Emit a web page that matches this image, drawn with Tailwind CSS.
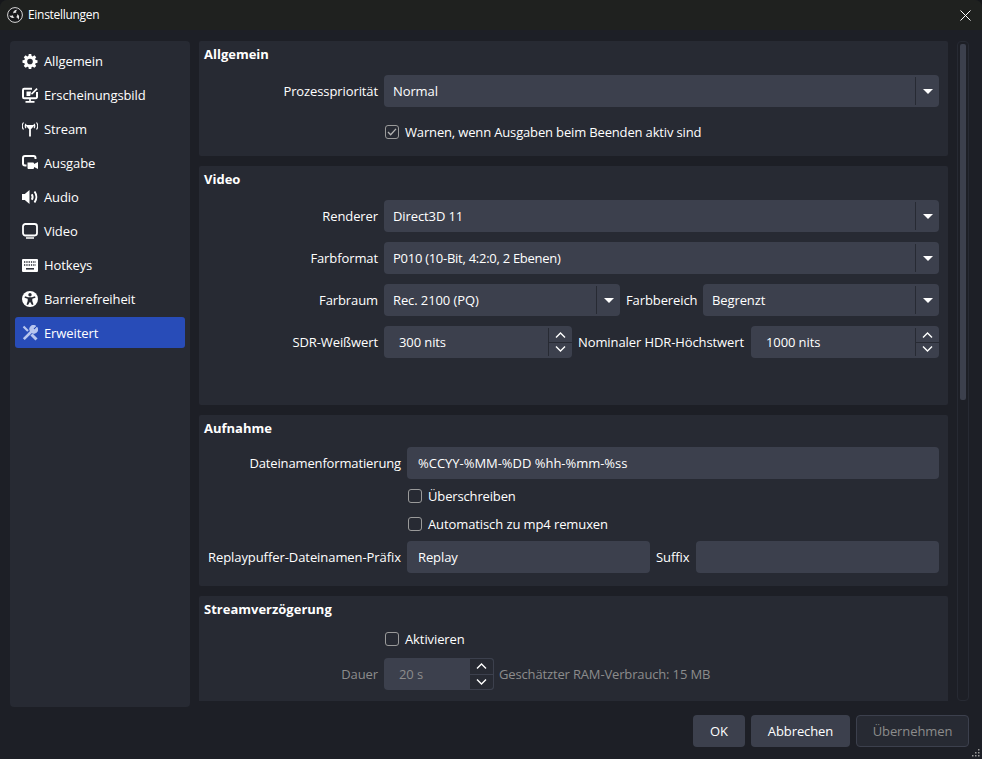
<!DOCTYPE html>
<html lang="de"><head><meta charset="utf-8"><title>Einstellungen</title>
<script src="https://cdn.jsdelivr.net/npm/@tailwindcss/browser@4"></script></head>
<body class="bg-[#16171a]">
<div class="w-[982px] h-[759px] overflow-hidden relative flex flex-col rounded-t-[7px] bg-[#1d1f26] text-white text-[13px] leading-[18px] tracking-[-0.1px] font-['Open_Sans',sans-serif]">
  <header class="h-[30px] shrink-0 bg-[#1f211f] flex items-center pl-[7px] pr-[11px]">
    <svg width="16" height="16" viewBox="0 0 16 16" class="mr-[5px]"><circle cx="8" cy="8" r="7.400" fill="#17181a" stroke="#d8d8d8" stroke-width="1"/><g fill="#e0e0e0"><path d="M6.300 6.600C5.800 4.500 7.500 2.600 10.600 2.800 9.300 3.500 8.800 4.500 9.300 5.900 8.300 5.500 7 5.700 6.300 6.600Z"/><path transform="rotate(120 8 8)" d="M6.300 6.600C5.800 4.500 7.500 2.600 10.600 2.800 9.300 3.500 8.800 4.500 9.300 5.900 8.300 5.500 7 5.700 6.300 6.600Z"/><path transform="rotate(240 8 8)" d="M6.300 6.600C5.800 4.500 7.500 2.600 10.600 2.800 9.300 3.500 8.800 4.500 9.300 5.900 8.300 5.500 7 5.700 6.300 6.600Z"/></g></svg>
    <span class="text-[12px] tracking-[-0.3px]">Einstellungen</span>
    <svg width="11" height="11" viewBox="0 0 11 11" class="ml-auto"><path d="M.5.500l10 10M10.500.500l-10 10" stroke="#fff" fill="none"/></svg>
  </header>
  <div class="flex h-[671px] pt-[11px] pl-[10px]">
    <nav class="w-[180px] h-[666px] bg-[#272a33] rounded-[4px] px-[5px] pt-[3px] shrink-0">
      <div class="h-[34px] flex items-center pl-[7px] gap-[6px]"><svg width="16" height="15" viewBox="0 0 25 24" fill="#fff"><path fill-rule="evenodd" d="M10 1h4l.6 3.100 1.700.7L19 3l3 3-1.800 2.700.7 1.700L24 11v4l-3.100.6-.7 1.700L22 20l-3 3-2.700-1.800-1.700.7L14 25h-4l-.6-3.100-1.700-.7L5 23l-3-3 1.800-2.700-.7-1.700L0 15v-4l3.100-.6.7-1.700L2 6l3-3 2.700 1.800 1.700-.7ZM12 8.500a4.500 4.500 0 1 0 0 9 4.500 4.500 0 0 0 0-9Z" transform="translate(.5 -1)"/></svg>Allgemein</div>
      <div class="h-[34px] flex items-center pl-[7px] gap-[6px]"><svg width="16" height="16" viewBox="0 0 16 16" fill="none"><path d="M10 1.800H2.200A1.200 1.200 0 0 0 1 3v7a1.200 1.200 0 0 0 1.200 1.200h11.600A1.200 1.200 0 0 0 15 10V5" stroke="#fff" stroke-width="2"/><path d="M4.500 4.500h4.500l-.8 4.500H4.500Z" fill="#fff"/><path d="M9 6.500l5.500-5.500 1.200 1.200L10 7.700Z" fill="#fff"/><path d="M8 11.500v2.500M3.500 14.800h9" stroke="#fff" stroke-width="1.700"/></svg>Erscheinungsbild</div>
      <div class="h-[34px] flex items-center pl-[7px] gap-[6px]"><svg width="16" height="16" viewBox="0 0 16 16" fill="none" stroke="#fff"><path d="M8 6v9.500M5.200 5h5.600L8 8Z" stroke-width="1.800"/><path d="M4 2.800c-.9 1.300-.9 3 0 4.300M1.500 1.500c-1.500 2-1.500 5 0 7M12 2.800c.9 1.300.9 3 0 4.300M14.500 1.500c1.500 2 1.500 5 0 7" stroke-width="1.200"/></svg>Stream</div>
      <div class="h-[34px] flex items-center pl-[7px] gap-[6px]"><svg width="16" height="16" viewBox="0 0 16 16" fill="none"><path d="M13.500 4V3a2 2 0 0 0-2-2H3a2 2 0 0 0-2 2v5.500a2 2 0 0 0 2 2h1.500" stroke="#fff" stroke-width="2"/><path d="M5.500 7.500H11a1 1 0 0 1 1 1v.5l4-2v7l-4-2v1a1 1 0 0 1-1 1H6.500a1 1 0 0 1-1-1Z" fill="#fff"/></svg>Ausgabe</div>
      <div class="h-[34px] flex items-center pl-[7px] gap-[6px]"><svg width="16" height="16" viewBox="0 0 16 16" fill="none"><path d="M0 5h2.800L7.500 1v14L2.800 11H0Z" fill="#fff"/><path d="M9.800 5.200c1 1.700 1 3.900 0 5.600M12.500 2.500c2.400 3.200 2.400 7.800 0 11" stroke="#fff" stroke-width="2"/></svg>Audio</div>
      <div class="h-[34px] flex items-center pl-[7px] gap-[6px]"><svg width="16" height="16" viewBox="0 0 16 16" fill="none"><rect x="1" y="1" width="14" height="11.500" rx="2.400" stroke="#fff" stroke-width="1.800"/><path d="M4 15h8" stroke="#fff" stroke-width="1.500"/></svg>Video</div>
      <div class="h-[34px] flex items-center pl-[7px] gap-[6px]"><svg width="16" height="13" viewBox="0 0 16 13"><rect width="16" height="13" rx="1" fill="#fff"/><path d="M2 3h12M2 6h12" stroke="#272a33" stroke-width="1.300" stroke-dasharray="1.300 1"/><path d="M4 9.800h8" stroke="#272a33" stroke-width="1.500"/></svg>Hotkeys</div>
      <div class="h-[34px] flex items-center pl-[7px] gap-[6px]"><svg width="16" height="16" viewBox="0 0 16 16"><circle cx="8" cy="8" r="8" fill="#fff"/><circle cx="8" cy="3.800" r="1.700" fill="#272a33"/><path d="M3 5.300 6 6.200h4l3-.9.500 1.400-3.200 1.100V10l1.200 3.600-1.500.5L8 10.800 6 14.100l-1.500-.5L5.700 10V7.800L2.500 6.700Z" fill="#272a33"/></svg>Barrierefreiheit</div>
      <div class="h-[31px] mt-[1px] flex items-center pl-[7px] gap-[6px] bg-[#284cb8] rounded-[3px]"><svg width="16" height="16" viewBox="0 0 16 16" fill="none" stroke="#b8c6ee"><path d="M1.800 14.200 9.500 6.500" stroke-width="2.600"/><path d="M9 7a3.800 3.800 0 0 1 5-6l-2.500 2.500 1 1L15 2a3.800 3.800 0 0 1-6 5Z" fill="#b8c6ee" stroke-width=".5"/><path d="M1.500 1.500l4.500 4.500" stroke-width="2.200"/><path d="M9.500 9.500l5 5" stroke-width="3"/></svg>Erweitert</div>
    </nav>
    <main class="w-[749px] ml-[9px] h-[660px] overflow-hidden flex flex-col gap-[10px] shrink-0">
      <section class="h-[115px] shrink-0 bg-[#272a33] rounded-[2px] px-[5px] pt-[4px]">
        <h2 class="font-bold h-[18px] tracking-normal">Allgemein</h2>
        <div class="flex items-center mt-[12px]"><label class="w-[174px] text-right mr-[6px]">Prozesspriorität</label><div class="w-[555px] h-[32px] bg-[#3c404d] rounded-[4px] flex items-center pl-[9px] relative">Normal<span class="absolute right-0 top-[2px] bottom-[2px] w-[24px] border-l border-[#272a33] flex items-center justify-center"><svg width="10" height="5" viewBox="0 0 10 5"><path d="M0 0h10L5 5Z" fill="#fff"/></svg></span></div></div>
        <div class="flex items-center mt-[16px] ml-[181px] gap-[6px]"><span class="w-[14px] h-[14px] border border-[#9a9a9a] rounded-[3px] flex items-center justify-center"><svg width="10" height="8" viewBox="0 0 11 9" fill="none"><path d="M1 4.500 4 7.500 10 1" stroke="#b4b4b4" stroke-width="1.500"/></svg></span><span class="tracking-[-0.155px]">Warnen, wenn Ausgaben beim Beenden aktiv sind</span></div>
      </section>
      <section class="h-[239px] shrink-0 bg-[#272a33] rounded-[2px] px-[5px] pt-[4px]">
        <h2 class="font-bold h-[18px] tracking-normal">Video</h2>
        <div class="flex flex-col gap-[10px] mt-[12px]">
          <div class="flex items-center"><label class="w-[174px] text-right mr-[6px]">Renderer</label><div class="w-[555px] h-[32px] bg-[#3c404d] rounded-[4px] flex items-center pl-[9px] relative">Direct3D 11<span class="absolute right-0 top-[2px] bottom-[2px] w-[24px] border-l border-[#272a33] flex items-center justify-center"><svg width="10" height="5" viewBox="0 0 10 5"><path d="M0 0h10L5 5Z" fill="#fff"/></svg></span></div></div>
          <div class="flex items-center"><label class="w-[174px] text-right mr-[6px]">Farbformat</label><div class="w-[555px] h-[32px] bg-[#3c404d] rounded-[4px] flex items-center pl-[9px] relative"><span class="tracking-[-0.27px]">P010 (10-Bit, 4:2:0, 2 Ebenen)</span><span class="absolute right-0 top-[2px] bottom-[2px] w-[24px] border-l border-[#272a33] flex items-center justify-center"><svg width="10" height="5" viewBox="0 0 10 5"><path d="M0 0h10L5 5Z" fill="#fff"/></svg></span></div></div>
          <div class="flex items-center"><label class="w-[174px] text-right mr-[6px]">Farbraum</label><div class="w-[236px] h-[32px] bg-[#3c404d] rounded-[4px] flex items-center pl-[9px] relative">Rec. 2100 (PQ)<span class="absolute right-0 top-[2px] bottom-[2px] w-[24px] border-l border-[#272a33] flex items-center justify-center"><svg width="10" height="5" viewBox="0 0 10 5"><path d="M0 0h10L5 5Z" fill="#fff"/></svg></span></div><label class="mx-[6px] w-[71px] whitespace-nowrap">Farbbereich</label><div class="w-[236px] h-[32px] bg-[#3c404d] rounded-[4px] flex items-center pl-[9px] relative">Begrenzt<span class="absolute right-0 top-[2px] bottom-[2px] w-[24px] border-l border-[#272a33] flex items-center justify-center"><svg width="10" height="5" viewBox="0 0 10 5"><path d="M0 0h10L5 5Z" fill="#fff"/></svg></span></div></div>
          <div class="flex items-center"><label class="w-[174px] text-right mr-[6px]">SDR-Weißwert</label>
            <div class="w-[188px] h-[32px] bg-[#3c404d] rounded-[4px] flex items-center pl-[15px] relative">300 nits<span class="absolute right-0 top-[2px] bottom-[2px] w-[24px] border-l border-[#272a33] flex flex-col"><span class="flex-1 border-b border-[#272a33] flex items-center justify-center"><svg width="11" height="6" viewBox="0 0 11 6" fill="none"><path d="M1 5.500l4.500-4.500 4.500 4.500" stroke="#fff" stroke-width="1.400"/></svg></span><span class="flex-1 flex items-center justify-center"><svg width="11" height="6" viewBox="0 0 11 6" fill="none"><path d="M1 .5l4.500 4.500 4.500-4.500" stroke="#fff" stroke-width="1.400"/></svg></span></span></div>
            <label class="mx-[6px] w-[167px] whitespace-nowrap">Nominaler HDR-Höchstwert</label>
            <div class="w-[188px] h-[32px] bg-[#3c404d] rounded-[4px] flex items-center pl-[15px] relative">1000 nits<span class="absolute right-0 top-[2px] bottom-[2px] w-[24px] border-l border-[#272a33] flex flex-col"><span class="flex-1 border-b border-[#272a33] flex items-center justify-center"><svg width="11" height="6" viewBox="0 0 11 6" fill="none"><path d="M1 5.500l4.500-4.500 4.500 4.500" stroke="#fff" stroke-width="1.400"/></svg></span><span class="flex-1 flex items-center justify-center"><svg width="11" height="6" viewBox="0 0 11 6" fill="none"><path d="M1 .5l4.500 4.500 4.500-4.500" stroke="#fff" stroke-width="1.400"/></svg></span></span></div>
          </div>
        </div>
      </section>
      <section class="h-[171px] shrink-0 bg-[#272a33] rounded-[2px] px-[5px] pt-[4px]">
        <h2 class="font-bold h-[18px] tracking-normal">Aufnahme</h2>
        <div class="flex items-center mt-[10px]"><label class="w-[197px] text-right mr-[6px] tracking-[-0.14px]">Dateinamenformatierung</label><div class="w-[532px] h-[32px] bg-[#3c404d] rounded-[4px] flex items-center pl-[11px] tracking-[-0.03px]">%CCYY-%MM-%DD %hh-%mm-%ss</div></div>
        <div class="flex items-center mt-[8px] ml-[204px] gap-[6px] h-[18px]"><span class="w-[14px] h-[14px] border border-[#9a9a9a] rounded-[3px]"></span><span class="tracking-[-0.15px]">Überschreiben</span></div>
        <div class="flex items-center mt-[10px] ml-[204px] gap-[6px] h-[18px]"><span class="w-[14px] h-[14px] border border-[#9a9a9a] rounded-[3px]"></span>Automatisch zu mp4 remuxen</div>
        <div class="flex items-center mt-[8px]"><label class="w-[197px] text-right mr-[6px] whitespace-nowrap tracking-[-0.07px]">Replaypuffer-Dateinamen-Präfix</label><div class="w-[243px] h-[32px] bg-[#3c404d] rounded-[4px] flex items-center pl-[11px]">Replay</div><label class="mx-[6px] w-[34px]">Suffix</label><div class="w-[243px] h-[32px] bg-[#3c404d] rounded-[4px]"></div></div>
      </section>
      <section class="h-[105px] shrink-0 bg-[#272a33] rounded-t-[2px] px-[5px] pt-[4px]">
        <h2 class="font-bold h-[18px] tracking-normal">Streamverzögerung</h2>
        <div class="flex items-center mt-[12px] ml-[181px] gap-[6px] h-[18px]"><span class="w-[14px] h-[14px] border border-[#9a9a9a] rounded-[3px]"></span>Aktivieren</div>
        <div class="flex items-center mt-[10px] text-[#8c8c8c]"><label class="w-[174px] text-right mr-[6px]">Dauer</label>
          <div class="w-[110px] h-[32px] bg-[#3c404d] rounded-[4px] flex items-center pl-[15px] relative">20 s<span class="absolute right-0 top-0 bottom-0 w-[24px] bg-[#272a33] border border-l-0 border-[#3c404d] rounded-r-[4px] flex flex-col"><span class="flex-1 border-b border-[#3c404d] flex items-center justify-center"><svg width="11" height="6" viewBox="0 0 11 6" fill="none"><path d="M1 5.500l4.500-4.500 4.500 4.500" stroke="#fff" stroke-width="1.400"/></svg></span><span class="flex-1 flex items-center justify-center"><svg width="11" height="6" viewBox="0 0 11 6" fill="none"><path d="M1 .5l4.500 4.500 4.500-4.500" stroke="#fff" stroke-width="1.400"/></svg></span></span></div>
          <span class="ml-[5px] tracking-[-0.15px]">Geschätzter RAM-Verbrauch: 15 MB</span></div>
      </section>
    </main>
    <div class="w-[12px] ml-[9px] h-[660px] border border-[#272a33] rounded-[4px] p-[2px] shrink-0"><div class="w-[6px] h-[356px] bg-[#3c404d] rounded-[2px]"></div></div>
  </div>
  <footer class="flex justify-end gap-[6px] pr-[13px] mt-[14px]">
    <button class="w-[52px] h-[32px] bg-[#3c404d] rounded-[4px]">OK</button>
    <button class="w-[99px] h-[32px] bg-[#3c404d] rounded-[4px]">Abbrechen</button>
    <button class="w-[113px] h-[32px] border border-[#3c404d] bg-[#272a33] text-[#8c8c8c] rounded-[4px]">Übernehmen</button>
  </footer>
  <svg width="8" height="8" viewBox="0 0 8 8" class="absolute right-[2px] bottom-[2px]" fill="#9a9a9a"><rect x="6" y="0" width="1.500" height="1.500"/><rect x="3" y="3" width="1.500" height="1.500"/><rect x="6" y="3" width="1.500" height="1.500"/><rect x="0" y="6" width="1.500" height="1.500"/><rect x="3" y="6" width="1.500" height="1.500"/><rect x="6" y="6" width="1.500" height="1.500"/></svg>
</div>
</body></html>
